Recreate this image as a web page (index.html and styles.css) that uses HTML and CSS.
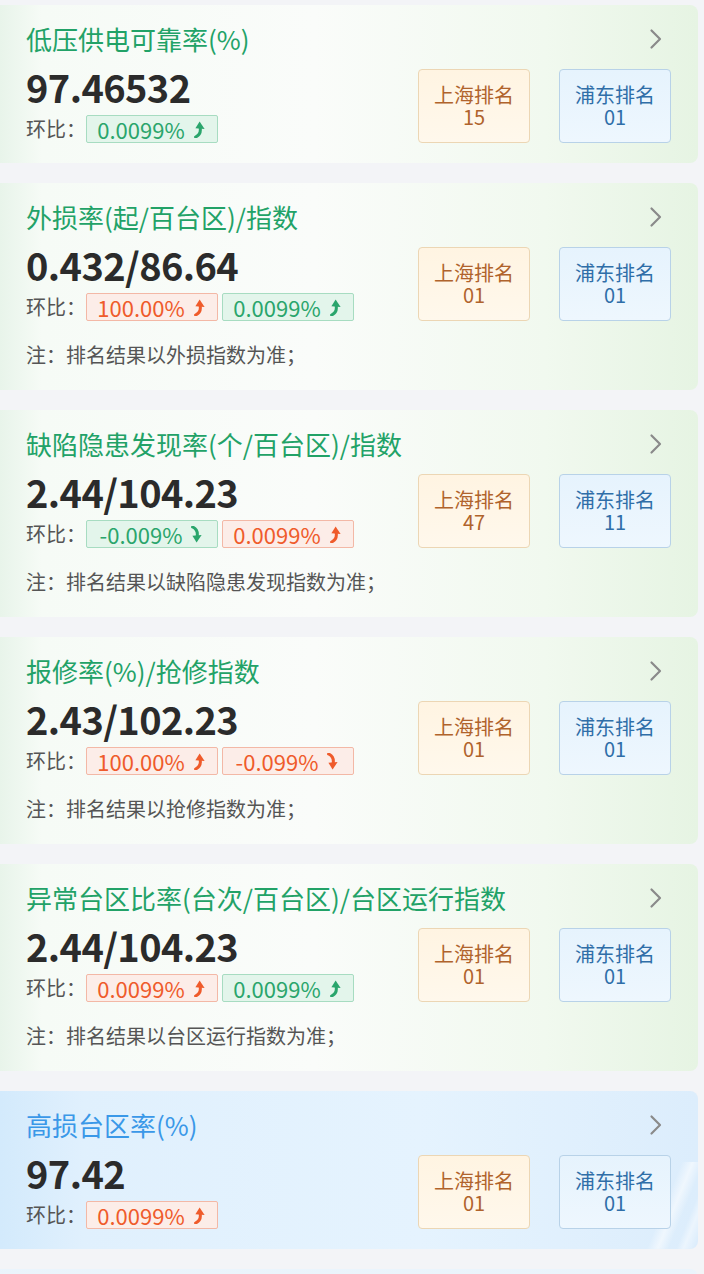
FILE: index.html
```html
<!DOCTYPE html>
<html lang="zh-CN">
<head>
<meta charset="utf-8">
<title>指标排名</title>
<link rel="stylesheet" href="styles.css">
</head>
<body>
<svg width="0" height="0" class="defs" aria-hidden="true">
  <defs>
    <symbol id="arrow-up" viewBox="0 0 11 17">
      <path d="M1.6 16 C5 14.4 6.9 11.4 6.2 7" fill="none" stroke="currentColor" stroke-width="3" stroke-linecap="round"/>
      <path d="M5.6 0.6 L10.6 8 L1.4 7.2 Z" fill="currentColor"/>
    </symbol>
    <symbol id="arrow-down" viewBox="0 0 11 17">
      <path d="M1.6 1 C5 2.6 6.9 5.6 6.2 10" fill="none" stroke="currentColor" stroke-width="3" stroke-linecap="round"/>
      <path d="M5.6 16.4 L10.6 9 L1.4 9.8 Z" fill="currentColor"/>
    </symbol>
    <symbol id="chev" viewBox="0 0 14 22">
      <path d="M2.5 2.5 L11 11 L2.5 19.5" fill="none" stroke="currentColor" stroke-width="2.2" stroke-linecap="round" stroke-linejoin="round"/>
    </symbol>
  </defs>
</svg>

<main class="list">
  <section class="card">
    <div class="card-head">
      <h2 class="title">低压供电可靠率(%)</h2>
      <svg class="chevron"><use href="#chev"/></svg>
    </div>
    <div class="card-body">
      <div class="metrics">
        <div class="value">97.46532</div>
        <div class="ratio">
          <span class="ratio-label">环比：</span>
          <span class="chip chip-green">0.0099%<svg class="arrow"><use href="#arrow-up"/></svg></span>
        </div>
      </div>
      <div class="ranks">
        <div class="rank rank-sh"><span>上海排名</span><span>15</span></div>
        <div class="rank rank-pd"><span>浦东排名</span><span>01</span></div>
      </div>
    </div>
  </section>

  <section class="card">
    <div class="card-head">
      <h2 class="title">外损率(起/百台区)/指数</h2>
      <svg class="chevron"><use href="#chev"/></svg>
    </div>
    <div class="card-body">
      <div class="metrics">
        <div class="value">0.432/86.64</div>
        <div class="ratio">
          <span class="ratio-label">环比：</span>
          <span class="chip chip-red">100.00%<svg class="arrow"><use href="#arrow-up"/></svg></span>
          <span class="chip chip-green">0.0099%<svg class="arrow"><use href="#arrow-up"/></svg></span>
        </div>
      </div>
      <div class="ranks">
        <div class="rank rank-sh"><span>上海排名</span><span>01</span></div>
        <div class="rank rank-pd"><span>浦东排名</span><span>01</span></div>
      </div>
    </div>
    <p class="note">注：排名结果以外损指数为准；</p>
  </section>

  <section class="card">
    <div class="card-head">
      <h2 class="title">缺陷隐患发现率(个/百台区)/指数</h2>
      <svg class="chevron"><use href="#chev"/></svg>
    </div>
    <div class="card-body">
      <div class="metrics">
        <div class="value">2.44/104.23</div>
        <div class="ratio">
          <span class="ratio-label">环比：</span>
          <span class="chip chip-green">-0.009%<svg class="arrow"><use href="#arrow-down"/></svg></span>
          <span class="chip chip-red">0.0099%<svg class="arrow"><use href="#arrow-up"/></svg></span>
        </div>
      </div>
      <div class="ranks">
        <div class="rank rank-sh"><span>上海排名</span><span>47</span></div>
        <div class="rank rank-pd"><span>浦东排名</span><span>11</span></div>
      </div>
    </div>
    <p class="note">注：排名结果以缺陷隐患发现指数为准；</p>
  </section>

  <section class="card">
    <div class="card-head">
      <h2 class="title">报修率(%)/抢修指数</h2>
      <svg class="chevron"><use href="#chev"/></svg>
    </div>
    <div class="card-body">
      <div class="metrics">
        <div class="value">2.43/102.23</div>
        <div class="ratio">
          <span class="ratio-label">环比：</span>
          <span class="chip chip-red">100.00%<svg class="arrow"><use href="#arrow-up"/></svg></span>
          <span class="chip chip-red">-0.099%<svg class="arrow"><use href="#arrow-down"/></svg></span>
        </div>
      </div>
      <div class="ranks">
        <div class="rank rank-sh"><span>上海排名</span><span>01</span></div>
        <div class="rank rank-pd"><span>浦东排名</span><span>01</span></div>
      </div>
    </div>
    <p class="note">注：排名结果以抢修指数为准；</p>
  </section>

  <section class="card">
    <div class="card-head">
      <h2 class="title">异常台区比率(台次/百台区)/台区运行指数</h2>
      <svg class="chevron"><use href="#chev"/></svg>
    </div>
    <div class="card-body">
      <div class="metrics">
        <div class="value">2.44/104.23</div>
        <div class="ratio">
          <span class="ratio-label">环比：</span>
          <span class="chip chip-red">0.0099%<svg class="arrow"><use href="#arrow-up"/></svg></span>
          <span class="chip chip-green">0.0099%<svg class="arrow"><use href="#arrow-up"/></svg></span>
        </div>
      </div>
      <div class="ranks">
        <div class="rank rank-sh"><span>上海排名</span><span>01</span></div>
        <div class="rank rank-pd"><span>浦东排名</span><span>01</span></div>
      </div>
    </div>
    <p class="note">注：排名结果以台区运行指数为准；</p>
  </section>

  <section class="card card-blue">
    <div class="card-head">
      <h2 class="title">高损台区率(%)</h2>
      <svg class="chevron"><use href="#chev"/></svg>
    </div>
    <div class="card-body">
      <div class="metrics">
        <div class="value">97.42</div>
        <div class="ratio">
          <span class="ratio-label">环比：</span>
          <span class="chip chip-red">0.0099%<svg class="arrow"><use href="#arrow-up"/></svg></span>
        </div>
      </div>
      <div class="ranks">
        <div class="rank rank-sh"><span>上海排名</span><span>01</span></div>
        <div class="rank rank-pd"><span>浦东排名</span><span>01</span></div>
      </div>
    </div>
  </section>

  <section class="card card-blue card-peek"></section>
</main>
</body>
</html>
```

FILE: styles.css
```css
* { box-sizing: border-box; }

html, body {
  margin: 0;
  padding: 0;
  background: #f3f4f7;
  font-family: "Noto Sans CJK SC", "Noto Sans", sans-serif;
  color: #333;
}

.defs { position: absolute; width: 0; height: 0; overflow: hidden; }

.list {
  display: flex;
  flex-direction: column;
  gap: 20px;
  padding: 5px 6px 0 0;
}

.card {
  border-radius: 0 8px 8px 0;
  padding: 17px 27px 20px 26px;
  background:
    linear-gradient(90deg, #e8f4ea 0%, #f6fbf6 6%, #fafcfa 45%, #f1f9ef 78%, #e6f4e3 100%);
}

.card-head {
  display: flex;
  align-items: center;
  justify-content: space-between;
  height: 34px;
}

.title {
  margin: 0;
  font-size: 26px;
  line-height: 34px;
  font-weight: 400;
  color: #22a267;
  white-space: nowrap;
}

.chevron {
  flex-shrink: 0;
  width: 14px;
  height: 22px;
  margin-right: 8px;
  color: #8a8a8a;
}

.card-body {
  display: flex;
  justify-content: space-between;
  align-items: flex-start;
  margin-top: 11px;
}

.metrics {
  display: flex;
  flex-direction: column;
}

.value {
  font-size: 38px;
  line-height: 40px;
  font-weight: 700;
  color: #2b2b2b;
  letter-spacing: -0.6px;
  white-space: nowrap;
}

.ratio {
  display: flex;
  align-items: center;
  margin-top: 8px;
  white-space: nowrap;
}

.ratio-label {
  flex-shrink: 0;
  font-size: 20px;
  line-height: 28px;
  color: #555;
  width: 60px;
}

.chip {
  flex-shrink: 0;
  display: inline-flex;
  align-items: center;
  justify-content: center;
  width: 132px;
  height: 28px;
  padding: 0 2px 0 0;
  border: 1px solid;
  border-radius: 2px;
  font-size: 22px;
  line-height: 26px;
  gap: 9px;
}

.chip + .chip { margin-left: 4px; }

.chip-green {
  color: #2aa56c;
  background: #e3f5eb;
  border-color: #a7dcc1;
}

.chip-red {
  color: #ef5b2b;
  background: #fcede8;
  border-color: #f3b8a6;
}

.arrow {
  width: 11px;
  height: 17px;
}

.ranks {
  flex-shrink: 0;
  display: flex;
  gap: 29px;
  margin-top: 2px;
}

.rank {
  width: 112px;
  height: 74px;
  border: 1px solid;
  border-radius: 4px;
  display: flex;
  flex-direction: column;
  align-items: center;
  justify-content: center;
  font-size: 20px;
  line-height: 22px;
}

.rank-sh {
  color: #b0632c;
  background: linear-gradient(180deg, #fff4e2 0%, #fff8ec 100%);
  border-color: #ecd6b4;
}

.rank-pd {
  color: #2f6ea8;
  background: linear-gradient(180deg, #e6f3fd 0%, #eef7fe 100%);
  border-color: #b8d2e8;
}

.note {
  margin: 22px 0 3px;
  font-size: 20px;
  line-height: 24px;
  color: #555;
}

.card-blue {
  background:
    linear-gradient(112deg, transparent 93%, rgba(255,255,255,0.55) 94.5%, transparent 96%, transparent 97%, rgba(255,255,255,0.45) 98%, transparent 99.5%) right bottom / 100% 55% no-repeat,
    linear-gradient(90deg, #d3eafc 0%, #e0f0fd 12%, #e5f3fe 60%, #dcedfc 100%);
}

.card-blue .title { color: #3a98e8; }

.card-peek {
  height: 30px;
  padding: 0;
  background: linear-gradient(180deg, #eaf4fc 0%, #f2f7fb 100%);
}
```
